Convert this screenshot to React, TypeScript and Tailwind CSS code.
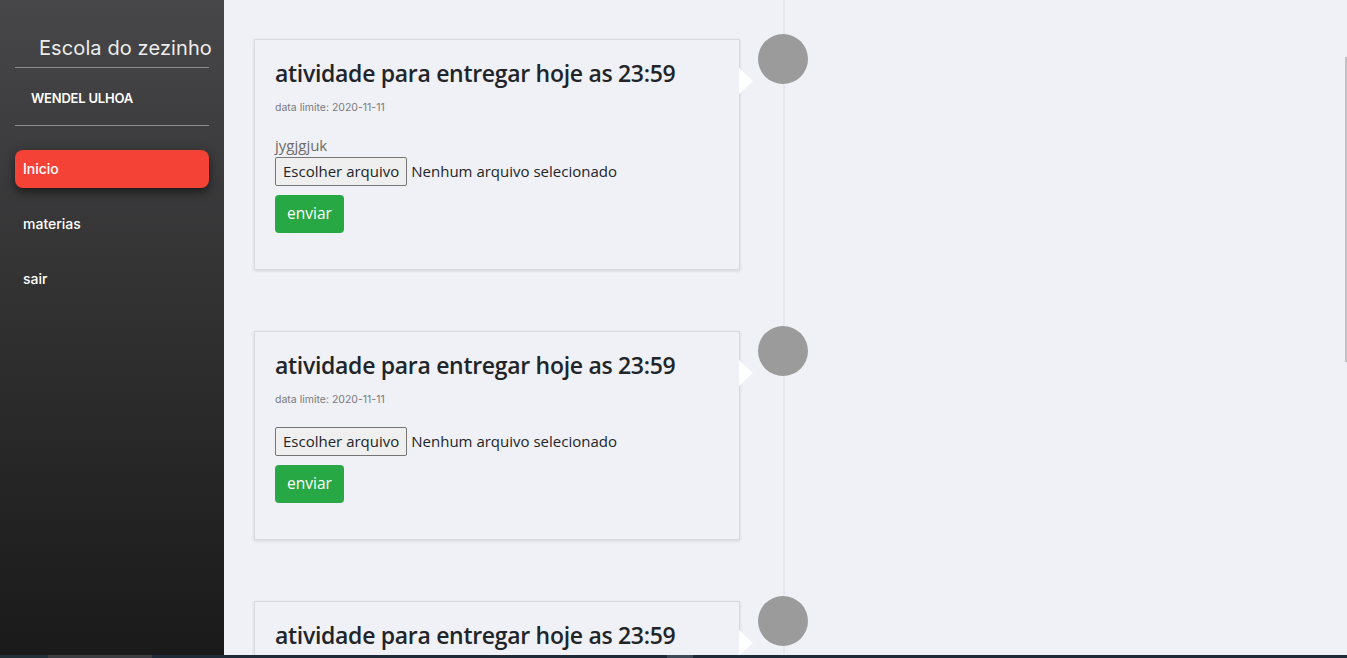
const tasks = [
  { title: 'atividade para entregar hoje as 23:59', limit: '2020-11-11', desc: 'jygjgjuk' },
  { title: 'atividade para entregar hoje as 23:59', limit: '2020-11-11', desc: '' },
  { title: 'atividade para entregar hoje as 23:59', limit: '2020-11-11', desc: '' },
]

const Sidebar = () => {
  return (
    <aside className="flex h-full w-[224px] shrink-0 flex-col bg-gradient-to-b from-[#474749] to-[#1a1a1a] px-[15px] font-['Inter',sans-serif]">
      <h1 className="-mr-[15px] mt-[35px] pl-[24px] text-[20px] leading-[26px] tracking-[0.1px] whitespace-nowrap text-[#ececec]">
        Escola do zezinho
      </h1>
      <hr className="mt-[6px] border-t border-[#8c8c8c]" />
      <p className="mt-[21px] pl-[16px] text-[13px] leading-[18px] font-semibold tracking-[-0.2px] text-white">WENDEL ULHOA</p>
      <hr className="mt-[18px] border-t border-[#8c8c8c]" />
      <nav className="mt-[24px] flex flex-col gap-[17px]">
        <a className="flex h-[38px] items-center rounded-lg bg-[#f44336] px-2 pb-[2px] text-[14px] font-medium text-white shadow-[0_4px_10px_rgba(0,0,0,0.55)]">
          Inicio
        </a>
        <a className="flex h-[38px] items-center px-2 pb-[2px] text-[14px] font-medium text-white">materias</a>
        <a className="flex h-[38px] items-center px-2 pb-[2px] text-[14px] font-medium text-white">sair</a>
      </nav>
    </aside>
  )
}

const TaskCard = ({ task }: { task: (typeof tasks)[number] }) => {
  return (
    <div className="flex items-start">
      <div className="relative mt-[5px] w-[486px] shrink-0 border border-[#d9d9dc] bg-[#f0f1f6] px-[20px] pt-[19px] pb-[36px] shadow-[0_1px_3px_rgba(0,0,0,0.12)]">
        <span className="absolute top-[28px] -right-[14px] h-0 w-0 border-y-[13px] border-l-[14px] border-y-transparent border-l-white" />
        <h2 className="text-[23px] leading-[29px] font-semibold tracking-[-0.3px] text-[#212529]">{task.title}</h2>
        <p className="mt-[12px] font-['Inter',sans-serif] text-[10.5px] leading-[16px] text-[#7a7a80]">data limite: {task.limit}</p>
        <div className="mt-[19px] flex flex-col">
          {task.desc && <p className="mb-[2px] text-[15px] leading-[20px] text-[#6c6c6c]">{task.desc}</p>}
          <div className="flex items-center gap-[4px] text-[15px] text-[#212529]">
            <span className="flex h-[29px] items-center rounded-[2px] border border-[#767676] bg-[#efefef] px-[7px]">
              Escolher arquivo
            </span>
            <span>Nenhum arquivo selecionado</span>
          </div>
          <button className="mt-[9px] h-[38px] w-[69px] rounded-[4px] bg-[#28a745] text-[15.5px] text-white">enviar</button>
        </div>
      </div>
      <div className="ml-[18px] h-[50px] w-[50px] shrink-0 rounded-full bg-[#9b9b9b]" />
    </div>
  )
}

export default function App() {
  return (
    <div className="flex h-[658px] w-[1347px] flex-col overflow-hidden bg-[#f0f1f6] font-['Open_Sans',sans-serif]">
      <div className="relative flex min-h-0 flex-1">
        <Sidebar />
        <main className="relative flex-1 overflow-hidden">
          <div className="absolute top-0 bottom-0 left-[559px] w-[2px] bg-[#e6e7ec]" />
          <div className="relative flex flex-col gap-[56px] pt-[34px] pl-[30px]">
            {tasks.map((t, i) => (
              <TaskCard key={i} task={t} />
            ))}
          </div>
          <div className="absolute top-[57px] right-0 h-[305px] w-[2px] bg-[#c1c1c1]" />
        </main>
      </div>
      <div className="flex h-[3px] shrink-0 bg-[#1e2a38]">
        <div className="w-[48px] bg-[#22303a]" />
        <div className="w-[104px] bg-[#3b3d40]" />
        <div className="ml-[515px] w-[26px] bg-[#3e4a58]" />
      </div>
    </div>
  )
}
